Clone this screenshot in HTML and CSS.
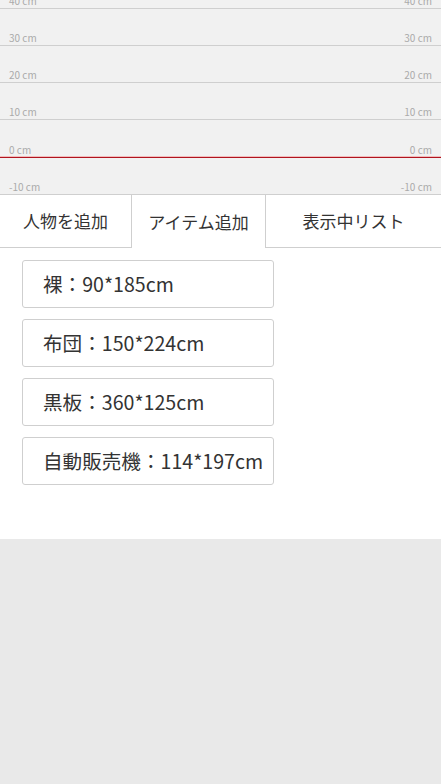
FILE: index.html
```html
<!DOCTYPE html>
<html lang="ja">
<head>
  <meta charset="UTF-8">
  <title>サイズ比較</title>
  <link rel="stylesheet" href="styles.css">
</head>
<body>

  <div class="ruler">
    <div class="row"><span>40 cm</span><span>40 cm</span></div>
    <div class="row"><span>30 cm</span><span>30 cm</span></div>
    <div class="row"><span>20 cm</span><span>20 cm</span></div>
    <div class="row"><span>10 cm</span><span>10 cm</span></div>
    <div class="row zero"><span>0 cm</span><span>0 cm</span></div>
    <div class="row"><span>-10 cm</span><span>-10 cm</span></div>
  </div>

  <div class="tabs">
    <div class="tab first">人物を追加</div>
    <div class="tab active">アイテム追加</div>
    <div class="tab last">表示中リスト</div>
  </div>

  <div class="panel">
    <div class="item">裸：90*185cm</div>
    <div class="item">布団：150*224cm</div>
    <div class="item">黒板：360*125cm</div>
    <div class="item">自動販売機：114*197cm</div>
  </div>

</body>
</html>
```

FILE: styles.css
```css
body {
  margin: 0;
  background: #e9e9e9;
  font-family: 'Noto Sans CJK JP', 'Noto Sans', sans-serif;
  color: #333;
}

.ruler {
  height: 195px;
  background: #f1f1f1;
  display: flex;
  flex-direction: column;
  justify-content: flex-end;
  overflow: hidden;
}

.row {
  flex: 0 0 37px;
  box-sizing: border-box;
  border-bottom: 1px solid #cfcfcf;
  display: flex;
  justify-content: space-between;
  align-items: flex-end;
  padding: 0 9px 1px;
  font-size: 10px;
  line-height: 12px;
  color: #aaa;
}

.row.zero {
  flex-basis: 38px;
  border-bottom: 1px solid #b0141f;
  box-shadow: inset 0 -1px 0 #f2bcbc;
}

.tabs {
  display: flex;
  background: #fff;
  height: 53px;
}

.tab {
  box-sizing: border-box;
  display: flex;
  align-items: center;
  justify-content: center;
  font-size: 17px;
  border-bottom: 1px solid #cfcfcf;
  padding-bottom: 1px;
}

.tab.first {
  width: 131px;
}

.tab.active {
  width: 135px;
  border-left: 1px solid #cfcfcf;
  border-right: 1px solid #cfcfcf;
  border-bottom: none;
}

.tab.last {
  flex: 1;
}

.panel {
  background: #fff;
  height: 291px;
  padding: 12px 0 0 22px;
  box-sizing: border-box;
  display: flex;
  flex-direction: column;
  gap: 11px;
}

.item {
  width: 252px;
  height: 48px;
  box-sizing: border-box;
  border: 1px solid #cfcfcf;
  border-radius: 3px;
  display: flex;
  align-items: center;
  padding: 0 0 2px 20px;
  font-size: 19.6px;
  white-space: nowrap;
}
```
